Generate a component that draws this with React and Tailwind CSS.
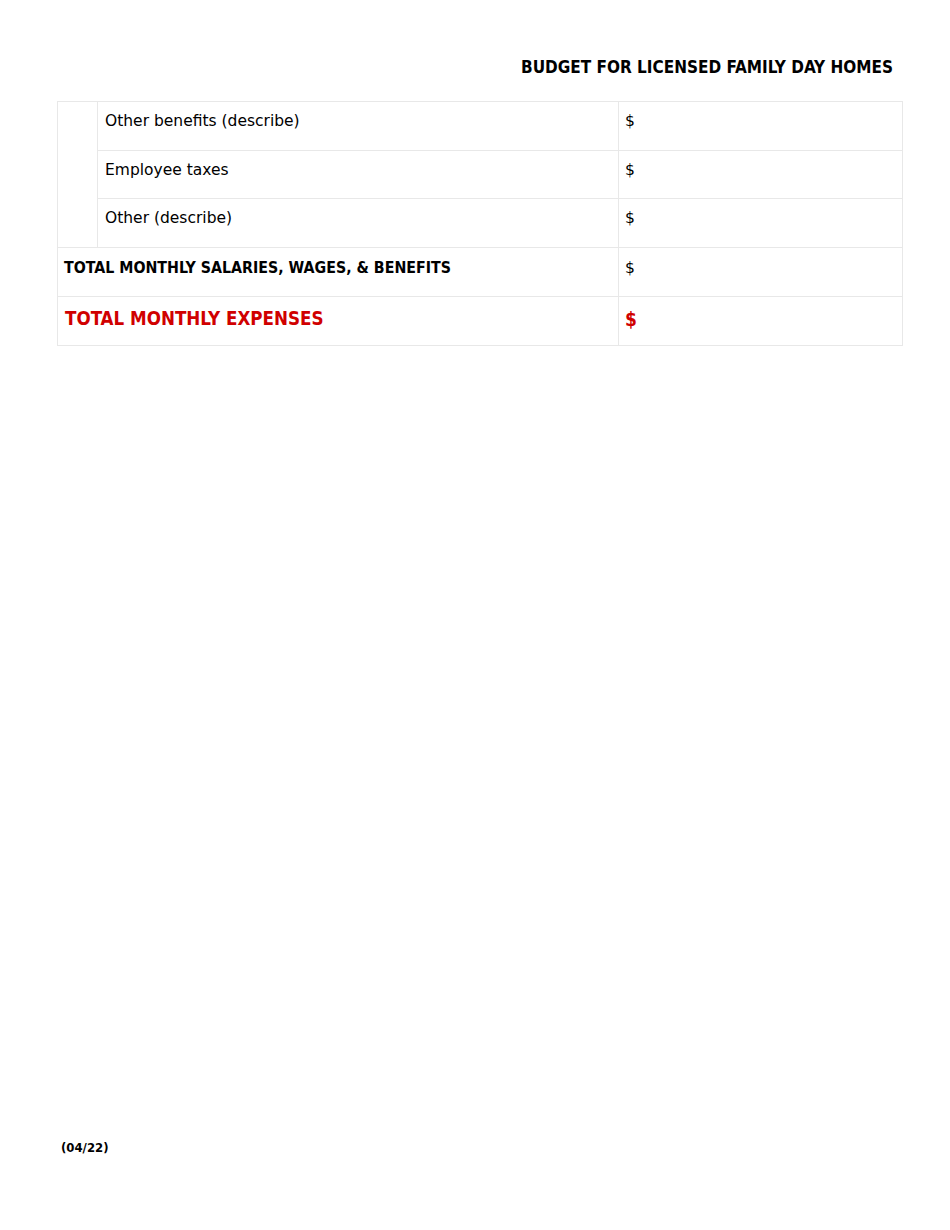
const rows = [
  { label: "Other benefits (describe)", h: "h-[48px]", border: false },
  { label: "Employee taxes", h: "h-[48px]", border: true },
  { label: "Other (describe)", h: "h-[49px]", border: true },
];

const cond = "font-['DejaVu_Sans_Condensed','DejaVu_Sans',sans-serif] font-stretch-condensed font-bold";

export default function App() {
  return (
    <div className="w-[950px] h-[1230px] bg-white text-black flex flex-col font-['DejaVu_Sans',sans-serif]">
      <div className="flex justify-end pt-[56px] pr-[57px]">
        <h1 className={`${cond} text-[17px] leading-[22px]`}>BUDGET FOR LICENSED FAMILY DAY HOMES</h1>
      </div>

      <div className="mt-[23px] ml-[57px] w-[846px] border border-[#e8e8e8]">
        <div className="flex">
          <div className="w-[40px] border-r border-[#e8e8e8]" />
          <div className="flex-1 flex flex-col">
            {rows.map((r) => (
              <div key={r.label} className={`flex ${r.h} ${r.border ? "border-t border-[#e8e8e8]" : ""}`}>
                <div className="w-[521px] pl-[7px] pt-[9px] text-[15.5px] leading-5 border-r border-[#e8e8e8]">{r.label}</div>
                <div className="flex-1 pl-[6px] pt-[9px] text-[15.5px] leading-5">$</div>
              </div>
            ))}
          </div>
        </div>
        <div className="flex h-[49px] border-t border-[#e8e8e8]">
          <div className={`${cond} w-[561px] pl-[6px] pt-[10px] text-[15.8px] leading-5 border-r border-[#e8e8e8]`}>
            TOTAL MONTHLY SALARIES, WAGES, &amp; BENEFITS
          </div>
          <div className="flex-1 pl-[6px] pt-[10px] text-[15.5px] leading-5">$</div>
        </div>
        <div className="flex h-[49px] border-t border-[#e8e8e8] text-[#d00000]">
          <div className={`${cond} w-[561px] pl-[7px] pt-[10px] text-[18.6px] leading-6 border-r border-[#e8e8e8]`}>
            TOTAL MONTHLY EXPENSES
          </div>
          <div className={`${cond} flex-1 pl-[6px] pt-[10px] text-[19px] leading-6`}>$</div>
        </div>
      </div>

      <div className={`${cond} mt-auto mb-[74px] ml-[61px] text-[13px] leading-4`}>(04/22)</div>
    </div>
  );
}
